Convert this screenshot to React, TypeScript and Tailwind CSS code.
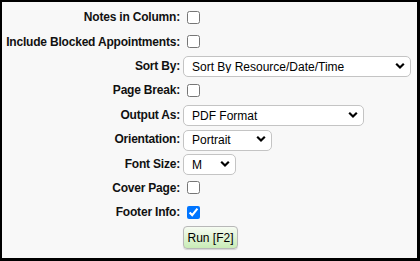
import React from "react";

function Chevron() {
  return (
    <svg width="10" height="7" viewBox="0 0 10 7" className="pointer-events-none absolute right-[6px] top-1/2 -translate-y-1/2">
      <path d="M1.2 1.3 L5 5 L8.8 1.3" fill="none" stroke="#000" strokeWidth="2.2" />
    </svg>
  );
}

function Select({ value, width }: { value: string; width: string }) {
  return (
    <div className={`relative ${width}`}>
      <select
        defaultValue={value}
        className="h-[21px] w-full appearance-none rounded-[5px] border border-[#c4c4c4] bg-white pl-[8px] pr-6 text-[12px] leading-none text-black outline-none"
      >
        <option>{value}</option>
      </select>
      <Chevron />
    </div>
  );
}

function Check({ checked }: { checked?: boolean }) {
  return (
    <input
      type="checkbox"
      defaultChecked={checked}
      className="m-0 ml-[4px] h-[13px] w-[13px] accent-[#0075ff]"
    />
  );
}

const rows: { label: string; control: React.ReactNode }[] = [
  { label: "Notes in Column:", control: <Check /> },
  { label: "Include Blocked Appointments:", control: <Check /> },
  { label: "Sort By:", control: <Select value="Sort By Resource/Date/Time" width="w-[228px]" /> },
  { label: "Page Break:", control: <Check /> },
  { label: "Output As:", control: <Select value="PDF Format" width="w-[181px]" /> },
  { label: "Orientation:", control: <Select value="Portrait" width="w-[89px]" /> },
  { label: "Font Size:", control: <Select value="M" width="w-[53px]" /> },
  { label: "Cover Page:", control: <Check /> },
  { label: "Footer Info:", control: <Check checked /> },
];

export default function App() {
  return (
    <div
      className="h-[261px] w-[420px] border-t-2 border-l-2 border-r-[3px] border-b-[3px] border-black bg-[#f8f8f8] pt-[3px]"
      style={{ fontFamily: '"Liberation Sans", Arial, sans-serif' }}
    >
      <div className="grid grid-cols-[178px_1fr] gap-x-[3px]">
        {rows.map((r) => (
          <React.Fragment key={r.label}>
            <div className="flex h-[24.4px] items-center justify-end whitespace-nowrap text-[12px] font-bold tracking-[-0.2px] text-[#111]">{r.label}</div>
            <div className="flex h-[24.4px] items-center">{r.control}</div>
          </React.Fragment>
        ))}
        <div />
        <div className="flex h-[26px] items-center">
          <button className="h-[23px] w-[55px] rounded-[4px] border border-[#b8b8b8] bg-gradient-to-b from-[#f6fbf2] to-[#c9ecb6] text-[12px] leading-none text-black shadow-[0_1px_1px_rgba(0,0,0,0.15)]">
            Run [F2]
          </button>
        </div>
      </div>
    </div>
  );
}
